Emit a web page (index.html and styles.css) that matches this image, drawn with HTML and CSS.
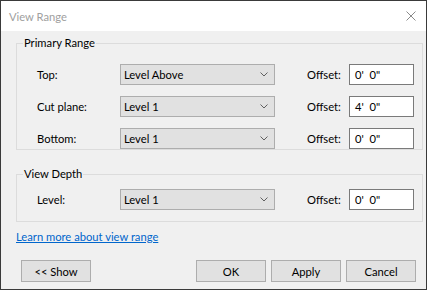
FILE: index.html
```html
<!DOCTYPE html>
<html>
<head>
<meta charset="utf-8">
<link rel="stylesheet" href="styles.css">
</head>
<body>
<div class="window">
  <div class="titlebar">
    <span class="title">View Range</span>
    <svg class="close" width="10" height="10" viewBox="0 0 10 10"><path d="M0.5 0.5 L9.5 9.5 M9.5 0.5 L0.5 9.5" stroke="#8a8a8a" stroke-width="1" fill="none"/></svg>
  </div>
  <div class="content">
    <fieldset class="group group-primary">
      <legend>Primary Range</legend>
      <div class="rows">
        <span class="label">Top:</span>
        <div class="combo"><span>Level Above</span><svg width="8" height="5" viewBox="0 0 8 5"><path d="M0.5 0.5 L4 4 L7.5 0.5" stroke="#606060" fill="none"/></svg></div>
        <span></span>
        <span class="label">Offset:</span>
        <div class="textbox">0'&nbsp; 0"</div>

        <span class="label">Cut plane:</span>
        <div class="combo"><span>Level 1</span><svg width="8" height="5" viewBox="0 0 8 5"><path d="M0.5 0.5 L4 4 L7.5 0.5" stroke="#606060" fill="none"/></svg></div>
        <span></span>
        <span class="label">Offset:</span>
        <div class="textbox">4'&nbsp; 0"</div>

        <span class="label">Bottom:</span>
        <div class="combo"><span>Level 1</span><svg width="8" height="5" viewBox="0 0 8 5"><path d="M0.5 0.5 L4 4 L7.5 0.5" stroke="#606060" fill="none"/></svg></div>
        <span></span>
        <span class="label">Offset:</span>
        <div class="textbox">0'&nbsp; 0"</div>
      </div>
    </fieldset>
    <fieldset class="group group-depth">
      <legend>View Depth</legend>
      <div class="rows">
        <span class="label">Level:</span>
        <div class="combo"><span>Level 1</span><svg width="8" height="5" viewBox="0 0 8 5"><path d="M0.5 0.5 L4 4 L7.5 0.5" stroke="#606060" fill="none"/></svg></div>
        <span></span>
        <span class="label">Offset:</span>
        <div class="textbox">0'&nbsp; 0"</div>
      </div>
    </fieldset>
    <a class="link" href="#">Learn more about view range</a>
    <div class="buttons">
      <div class="btn">&lt;&lt; Show</div>
      <div class="spacer"></div>
      <div class="btn">OK</div>
      <div class="btn">Apply</div>
      <div class="btn">Cancel</div>
    </div>
  </div>
</div>
</body>
</html>
```

FILE: styles.css
```css
html, body {
  margin: 0;
  padding: 0;
  background: #2b2b2b;
}
body {
  font-family: Lato, "Liberation Sans", Arial, sans-serif;
  font-size: 11.2px;
  color: #000;
}
.window {
  width: 427px;
  height: 290px;
  box-sizing: border-box;
  border: 1px solid #3a3a3a;
  background: #f0f0f0;
  display: flex;
  flex-direction: column;
}
.titlebar {
  height: 30px;
  background: #fff;
  display: flex;
  align-items: center;
  justify-content: space-between;
  padding: 0 10px 0 8px;
  flex: none;
}
.title {
  color: #a0a0a0;
}
.close {
  display: block;
}
.content {
  flex: 1;
  padding: 0 3px 0 15px;
  display: flex;
  flex-direction: column;
}
.group {
  margin: 0;
  border: 1px solid #dcdcdc;
  min-width: 0;
}
.group legend {
  margin-left: -14px;
  padding: 0 1px;
  line-height: 16px;
}
.group-primary {
  margin-top: 4px;
  padding: 13px 0 0 20px;
}
.group-depth {
  margin-top: 16px;
  padding: 7px 0 11px 20px;
}
.rows {
  display: grid;
  grid-template-columns: 83px 155px 32px 42px 65px;
  grid-auto-rows: 21px;
  row-gap: 11px;
}
.label {
  display: flex;
  align-items: center;
}
.combo {
  box-sizing: border-box;
  height: 21px;
  background: #e1e1e1;
  border: 1px solid #adadad;
  display: flex;
  align-items: center;
  justify-content: space-between;
  padding: 0 6px 0 3px;
}
.combo svg {
  display: block;
}
.textbox {
  box-sizing: border-box;
  height: 21px;
  background: #fff;
  border: 1px solid #7a7a7a;
  display: flex;
  align-items: center;
  padding-left: 5px;
}
.link {
  margin-top: 7px;
  line-height: 16px;
  color: #0066cc;
  text-decoration: underline;
  align-self: flex-start;
}
.buttons {
  margin-top: 15px;
  display: flex;
  gap: 5px;
  padding: 0 7px 0 5px;
}
.spacer {
  flex: 1;
}
.btn {
  box-sizing: border-box;
  width: 70px;
  height: 22px;
  background: #e1e1e1;
  border: 1px solid #adadad;
  display: flex;
  align-items: center;
  justify-content: center;
}
```
